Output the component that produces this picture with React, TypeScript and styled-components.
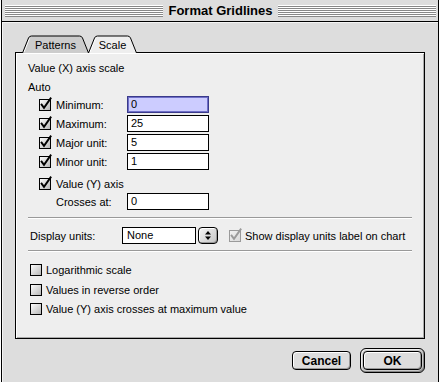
import React from 'react';
import styled, { createGlobalStyle } from 'styled-components';

const GlobalStyle = createGlobalStyle`
  html, body {
    margin: 0;
    padding: 0;
    background: #dddddd;
  }
  body {
    font-family: "Liberation Sans", Arial, sans-serif;
    font-size: 11px;
    color: #000;
  }
`;

const Screen = styled.div`
  width: 440px;
  height: 382px;
  overflow: hidden;
  display: flex;
  background: #ffffff;
`;

const Window = styled.div`
  margin-left: 1px;
  width: 438px;
  display: flex;
  flex-direction: column;
  border-left: 1px solid #000;
  border-right: 1px solid #000;
  box-sizing: border-box;
  background: #dddddd;
`;

const TitleBar = styled.div`
  height: 21px;
  display: flex;
  align-items: center;
  gap: 5px;
  padding: 0 2px 0 3px;
  border-bottom: 1px solid #000;
  background: #dddddd;
`;

const Stripes = styled.div`
  flex: 1;
  height: 12px;
  background: repeating-linear-gradient(to bottom, #ffffff 0 1px, #888888 1px 2px);
`;

const Title = styled.div`
  font-weight: bold;
  font-size: 13px;
  line-height: 16px;
`;

const Body = styled.div`
  flex: 1;
  display: flex;
  flex-direction: column;
  padding: 13px 13px 0 13px;
  box-shadow: inset 1px 1px 0 #f4f4f4;
`;

const TabRow = styled.div`
  display: flex;
  height: 17px;
  margin-left: 7px;
`;

const TabShape = styled.div<{ $w: number; $active?: boolean }>`
  position: relative;
  width: ${(p) => p.$w}px;
  height: 18px;
  margin-left: ${(p) => (p.$active ? -1 : 0)}px;
  z-index: ${(p) => (p.$active ? 2 : 1)};
  display: flex;
  align-items: center;
  justify-content: center;
  svg {
    position: absolute;
    inset: 0;
  }
`;

const TabLabel = styled.span`
  position: relative;
  line-height: 14px;
  padding-top: 1px;
`;

const Panel = styled.div`
  position: relative;
  height: 287px;
  box-sizing: border-box;
  border: 1px solid #000;
  background: #eeeeee;
  box-shadow: inset 1px 1px 0 #ffffff, inset -1px -1px 0 #aaaaaa;
  padding: 8px 12px 0 12px;
  display: flex;
  flex-direction: column;
`;

const Label = styled.div<{ $mt?: number; $indent?: number }>`
  line-height: 14px;
  margin-top: ${(p) => p.$mt ?? 0}px;
  padding-left: ${(p) => p.$indent ?? 0}px;
  white-space: nowrap;
`;

const FieldRow = styled.div<{ $mt?: number; $h?: number }>`
  display: grid;
  grid-template-columns: 17px 71px 82px;
  align-items: center;
  height: ${(p) => p.$h ?? 17}px;
  margin-top: ${(p) => p.$mt ?? 2}px;
  margin-left: 11px;
  white-space: nowrap;
`;

const Field = styled.div<{ $focus?: boolean }>`
  width: 82px;
  height: 17px;
  box-sizing: border-box;
  border: 1px solid ${(p) => (p.$focus ? '#3a3a8a' : '#000')};
  background: ${(p) => (p.$focus ? '#ccccff' : '#ffffff')};
  box-shadow: ${(p) => (p.$focus ? 'inset 0 0 0 1px #6f6fc8' : 'none')};
  padding: 0 3px;
  line-height: 15px;
  font-size: 11px;
`;

const Separator = styled.div<{ $mt: number }>`
  margin-top: ${(p) => p.$mt}px;
  height: 0;
  border-top: 1px solid #999999;
  border-bottom: 1px solid #ffffff;
`;

const UnitsRow = styled.div`
  display: flex;
  align-items: center;
  height: 17px;
  margin-top: 8px;
  padding-left: 2px;
  white-space: nowrap;
`;

const UnitsLabel = styled.div`
  width: 92px;
  line-height: 14px;
`;

const SelectBox = styled.div`
  width: 74px;
  height: 17px;
  box-sizing: border-box;
  border: 1px solid #000;
  background: #ffffff;
  padding: 0 4px;
  line-height: 15px;
`;

const Stepper = styled.div`
  width: 20px;
  height: 17px;
  margin-left: 2px;
  box-sizing: border-box;
  border: 1px solid #000;
  border-radius: 4px;
  background: linear-gradient(135deg, #f4f4f4, #c4c4c4);
  box-shadow: inset 1px 1px 0 #ffffff, inset -1px -1px 0 #999999;
  display: flex;
  align-items: center;
  justify-content: center;
`;

const CheckItem = styled.div<{ $mt?: number; $ml?: number; $disabled?: boolean }>`
  display: flex;
  align-items: center;
  gap: 4px;
  height: 14px;
  margin-top: ${(p) => p.$mt ?? 0}px;
  margin-left: ${(p) => p.$ml ?? 0}px;
  white-space: nowrap;
  color: #000;
`;

const BoxWrap = styled.span`
  display: inline-flex;
  width: 12px;
  height: 12px;
  svg {
    overflow: visible;
  }
`;

const ButtonRow = styled.div`
  display: flex;
  justify-content: flex-end;
  align-items: center;
  gap: 9px;
  margin-top: 9px;
`;

const PushButton = styled.div`
  width: 59px;
  height: 19px;
  box-sizing: border-box;
  border: 1px solid #000;
  border-radius: 4px;
  background: #dddddd;
  box-shadow: inset 1px 1px 0 #ffffff, inset -1px -1px 0 #999999;
  display: flex;
  align-items: center;
  justify-content: center;
  font-weight: bold;
  font-size: 12px;
`;

const DefaultRing = styled.div`
  width: 65px;
  height: 25px;
  box-sizing: border-box;
  border: 1px solid #000;
  border-radius: 6px;
  padding: 2px;
  background: #c8c8c8;
  box-shadow: inset 1px 1px 0 #eeeeee, inset -1px -1px 0 #888888;
  display: flex;
`;

const DefaultButton = styled(PushButton)`
  width: auto;
  height: auto;
  flex: 1;
`;

const Tab = ({ label, width, active }: { label: string; width: number; active?: boolean }) => {
  const w = width;
  const d = `M0.5 18 L6.5 3 Q7.3 1 9.5 1 L${w - 9.5} 1 Q${w - 7.3} 1 ${w - 6.5} 3 L${w - 0.5} 18`;
  return (
    <TabShape $w={w} $active={active}>
      <svg width={w} height={18} viewBox={`0 0 ${w} 18`}>
        <path d={`${d} Z`} fill={active ? '#eeeeee' : '#cccccc'} stroke="none" />
        <path d={`M2 17 L7.5 3.5`} stroke="#ffffff" strokeWidth={1} fill="none" />
        <path d={d} stroke="#000" strokeWidth={1} fill="none" />
      </svg>
      <TabLabel>{label}</TabLabel>
    </TabShape>
  );
};

const CheckBox = ({ checked, disabled }: { checked?: boolean; disabled?: boolean }) => {
  const ink = disabled ? '#9a9a9a' : '#000';
  const gid = disabled ? 'cbd' : 'cb';
  return (
    <BoxWrap>
      <svg width={12} height={12} viewBox="0 0 12 12">
        <defs>
          <linearGradient id={gid} x1="0" y1="0" x2="1" y2="1">
            <stop offset="0" stopColor={disabled ? '#f2f2f2' : '#ffffff'} />
            <stop offset="1" stopColor={disabled ? '#d8d8d8' : '#b4b4b4'} />
          </linearGradient>
        </defs>
        <rect x={0.5} y={0.5} width={11} height={11} fill={`url(#${gid})`} stroke={ink} />
        {checked && (
          <path
            d="M2.6 5.6 L5 8.8 L11.6 -0.6"
            stroke={ink}
            strokeWidth={1.9}
            fill="none"
            strokeLinecap="square"
          />
        )}
      </svg>
    </BoxWrap>
  );
};

const rows = [
  { label: 'Minimum:', value: '0', focus: true },
  { label: 'Maximum:', value: '25' },
  { label: 'Major unit:', value: '5' },
  { label: 'Minor unit:', value: '1' },
];

export default function App() {
  return (
    <Screen>
      <GlobalStyle />
      <Window>
        <TitleBar>
          <Stripes />
          <Title>Format Gridlines</Title>
          <Stripes />
        </TitleBar>
        <Body>
          <TabRow>
            <Tab label="Patterns" width={67} />
            <Tab label="Scale" width={49} active />
          </TabRow>
          <Panel>
            <Label>Value (X) axis scale</Label>
            <Label $mt={5}>Auto</Label>
            {rows.map((r, i) => (
              <FieldRow key={r.label} $mt={i === 0 ? 2 : 2}>
                <CheckBox checked />
                <span>{r.label}</span>
                <Field $focus={r.focus}>{r.value}</Field>
              </FieldRow>
            ))}
            <FieldRow $mt={6} $h={16}>
              <CheckBox checked />
              <span>Value (Y) axis</span>
            </FieldRow>
            <FieldRow $mt={1}>
              <span />
              <span>Crosses at:</span>
              <Field>0</Field>
            </FieldRow>
            <Separator $mt={7} />
            <UnitsRow>
              <UnitsLabel>Display units:</UnitsLabel>
              <SelectBox>None</SelectBox>
              <Stepper>
                <svg width={8} height={11} viewBox="0 0 8 11">
                  <path d="M4 1 L7 4.5 L1 4.5 Z" fill="#000" />
                  <path d="M4 10 L7 6.5 L1 6.5 Z" fill="#000" />
                </svg>
              </Stepper>
              <CheckItem $ml={11} $disabled>
                <CheckBox checked disabled />
                <span>Show display units label on chart</span>
              </CheckItem>
            </UnitsRow>
            <Separator $mt={6} />
            <CheckItem $mt={11} $ml={2}>
              <CheckBox />
              <span>Logarithmic scale</span>
            </CheckItem>
            <CheckItem $mt={6} $ml={2}>
              <CheckBox />
              <span>Values in reverse order</span>
            </CheckItem>
            <CheckItem $mt={5} $ml={2}>
              <CheckBox />
              <span>Value (Y) axis crosses at maximum value</span>
            </CheckItem>
          </Panel>
          <ButtonRow>
            <PushButton>Cancel</PushButton>
            <DefaultRing>
              <DefaultButton>OK</DefaultButton>
            </DefaultRing>
          </ButtonRow>
        </Body>
      </Window>
    </Screen>
  );
}
